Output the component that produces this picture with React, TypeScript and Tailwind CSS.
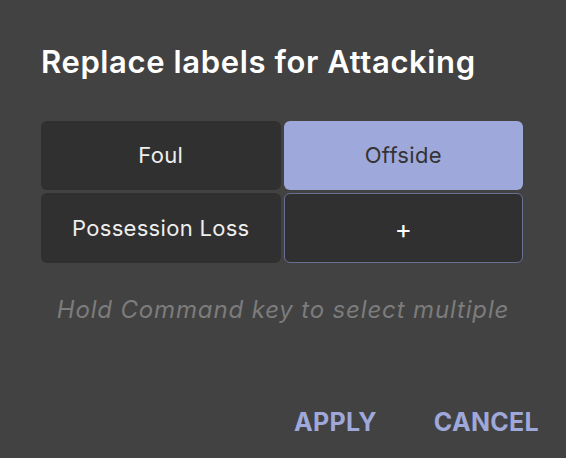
export default function App() {
    return (
        <div className="w-[566px] h-[458px] bg-[#424242] flex flex-col px-[41px] pt-[42px] font-['Inter',sans-serif]">
            <h1 className="text-[31px] leading-[40px] font-semibold text-white tracking-[0.62px]">
                Replace labels for Attacking
            </h1>

            <div className="grid grid-cols-2 gap-x-[3px] gap-y-[3px] mt-[39px] w-[482px]">
                <button className="h-[69px] rounded-[6px] bg-[#303030] text-[#eeeeee] text-[22px] tracking-[0.3px]">Foul</button>
                <button className="h-[69px] rounded-[6px] bg-[#9fa8da] text-[#333333] text-[22px] tracking-[0.3px]">Offside</button>
                <button className="h-[70px] rounded-[6px] bg-[#303030] text-[#eeeeee] text-[22px] tracking-[0.3px]">Possession Loss</button>
                <button className="h-[70px] rounded-[6px] bg-[#303030] border-[1.5px] border-[#6a6f91] text-white text-[26px]">+</button>
            </div>

            <p className="mt-[31px] text-center italic text-[24px] leading-[32px] text-[#7c7c7c] tracking-[0.85px]">
                Hold Command key to select multiple
            </p>

            <div className="flex justify-end gap-[57px] mt-[78px] mr-[-14px]">
                <span className="text-[25px] font-bold text-[#9fa8da] tracking-[0.3px]">APPLY</span>
                <span className="text-[25px] font-bold text-[#9fa8da] tracking-[0.3px]">CANCEL</span>
            </div>
        </div>
    )
}
